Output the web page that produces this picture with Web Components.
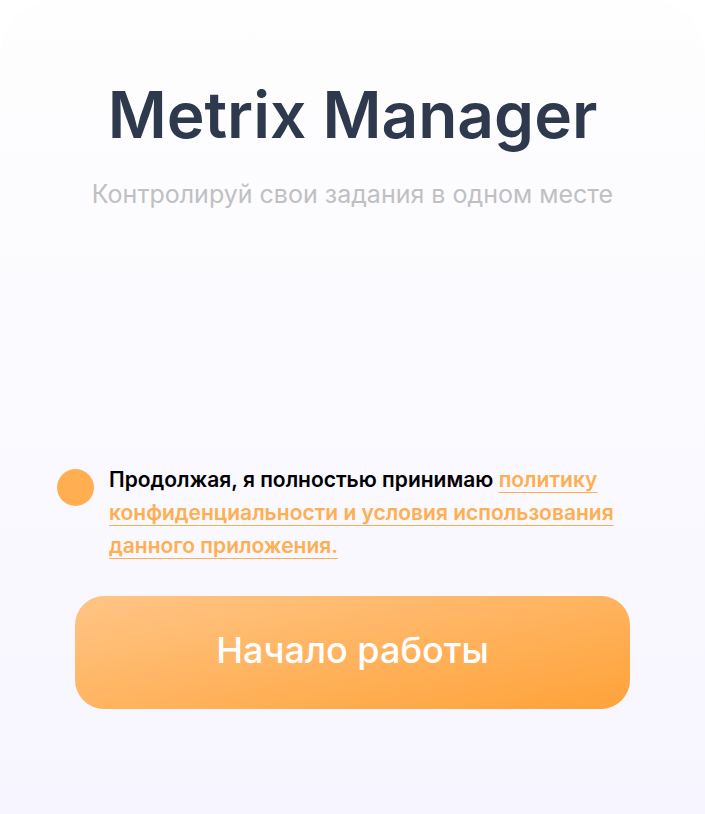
<!DOCTYPE html>
<html lang="ru"><head><meta charset="utf-8"><title>Metrix Manager</title>
<style>
html{min-height:100%;background:#fff}
body{margin:0;font-family:"Inter","Open Sans",sans-serif}
</style></head><body>
<welcome-screen>
<app-heading slot="heading"><span slot="title">Metrix Manager</span><span slot="subtitle">Контролируй свои задания в одном месте</span></app-heading>
<consent-check slot="consent"></consent-check>
<start-button slot="action">Начало работы</start-button>
</welcome-screen>
<script>
const define = (name, html) => customElements.define(name, class extends HTMLElement {
  constructor(){ super(); this.attachShadow({mode:"open"}).innerHTML = html; }
});
define("welcome-screen", `<style>
:host{display:flex;flex-direction:column;box-sizing:border-box;min-height:100vh;padding:73px 57px 105px;border-radius:56px 56px 0 0;background:linear-gradient(#fefefe,#f7f5ff)}
.bottom{margin-top:auto;display:flex;flex-direction:column;gap:34px}
</style><slot name="heading"></slot><div class="bottom"><slot name="consent"></slot><slot name="action"></slot></div>`);
define("app-heading", `<style>
:host{display:block;text-align:center}
h1{margin:0;font-size:64px;line-height:84px;font-weight:600;color:#2f394d}
p{margin:21px -20px 0;font-size:25px;line-height:32px;font-weight:400;color:#c0c0c2}
</style><h1><slot name="title"></slot></h1><p><slot name="subtitle"></slot></p>`);
define("consent-check", `<style>
:host{display:flex;gap:15px;align-items:flex-start}
input{appearance:none;flex:none;width:37px;height:37px;margin:6px 0 0;border-radius:50%;background:#ffaf51}
p{margin:0;font-size:21px;line-height:33px;font-weight:600;color:#000}
a{color:#ffaf51;text-decoration:underline;text-decoration-thickness:1px;text-underline-offset:5px;text-decoration-skip-ink:none}
</style><input type="checkbox" id="c" checked><p><label for="c">Продолжая, я полностью принимаю</label> <a href="#policy">политику<br>конфиденциальности и условия использования<br>данного приложения.</a></p>`);
define("start-button", `<style>
:host{display:block;padding:0 18px}
button{display:block;width:100%;padding:30px 16px 35px;border:0;border-radius:29px;background:linear-gradient(168deg,#ffc586,#ffa239);color:#fff;font:500 36px/48px "Inter",sans-serif}
</style><button type="button"><slot></slot></button>`);
</script></body></html>
